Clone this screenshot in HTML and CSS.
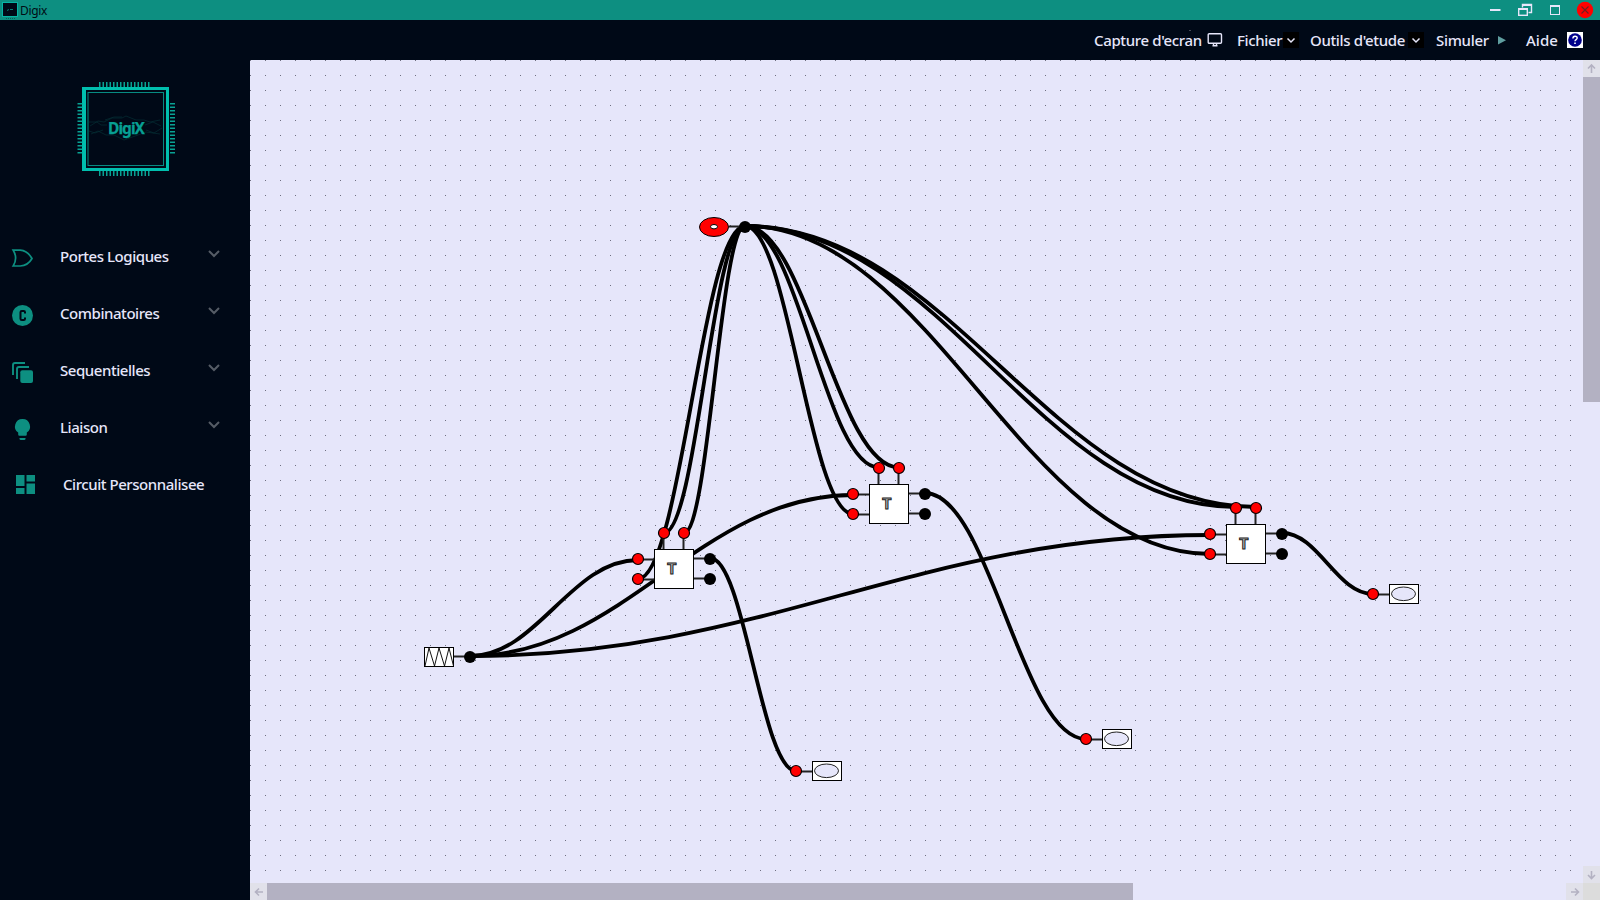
FILE: index.html
```
<!DOCTYPE html>
<html lang="fr">
<head>
<meta charset="utf-8">
<title>Digix</title>
<link rel="stylesheet" href="styles.css">
</head>
<body>
<div class="app">
  <header class="titlebar">
    <svg class="app-icon" width="20" height="20" viewBox="0 0 20 20"><rect x="2.5" y="2.5" width="15" height="14" fill="#000917" stroke="#06b5a5"/><path d="M7 10.500l2-1M10 9.500h3" stroke="#087d75"/><path d="M6 18.500h9" stroke="#075e58" stroke-dasharray="1 1"/></svg>
    <span class="app-name">Digix</span>
    <div class="window-buttons">
      <svg width="120" height="20" viewBox="0 0 120 20" fill="none" stroke="#e6e6fa">
        <path d="M10 10H20.500" stroke-width="2"/>
        <path d="M42.500 7.500V4.500H51.500V12.500H48.500" stroke-width="1.400"/><path d="M42 5H52" stroke-width="2"/>
        <rect x="38.700" y="8.700" width="8.600" height="6.600" stroke-width="1.400"/><path d="M38 9H48" stroke-width="2"/>
        <rect x="70.500" y="5.500" width="9" height="9"/><path d="M70 6H80" stroke-width="2"/>
        <circle cx="105" cy="10" r="8.200" fill="#f00" stroke="none"/><path d="M101.500 6.500l7 7m0-7l-7 7" stroke="#6f2020" stroke-width="1.100"/>
      </svg>
    </div>
  </header>
  <nav class="menubar">
    <span class="menu m-capture">Capture d'ecran</span>
    <svg class="i-monitor" width="16" height="16" viewBox="0 0 16 16" fill="none" stroke="#e6e6fa" stroke-width="1.400"><rect x="1.200" y="1.700" width="13.300" height="9.600" rx="1"/><path d="M6.500 11.500v2.500M9.500 11.500v2.500M5.500 13.800h5"/></svg>
    <span class="menu m-fichier">Fichier</span>
    <svg class="i-drop d1" width="16" height="16" viewBox="0 0 16 16"><rect width="16" height="16"/><path d="M4.500 6.500L8 10l3.500-3.500" fill="none" stroke="#e6e6fa" stroke-width="1.500"/></svg>
    <span class="menu m-outils">Outils d'etude</span>
    <svg class="i-drop d2" width="16" height="16" viewBox="0 0 16 16"><rect width="16" height="16"/><path d="M4.500 6.500L8 10l3.500-3.500" fill="none" stroke="#e6e6fa" stroke-width="1.500"/></svg>
    <span class="menu m-simuler">Simuler</span>
    <svg class="i-play" width="8" height="16" viewBox="0 0 8 16"><path d="M0 4l8 4.200L0 12.500z" fill="#5f9ea0"/></svg>
    <span class="menu m-aide">Aide</span>
    <svg class="i-help" width="16" height="16" viewBox="0 0 16 16"><rect width="16" height="16" fill="#fff"/><circle cx="8" cy="8" r="6.800" fill="#00008b"/><path d="M5.900 6.500c0-3 4.300-3 4.300-.4 0 1.500-2.200 1.500-2.200 3.200" fill="none" stroke="#fff" stroke-width="1.400"/><path d="M7.200 10.600h1.600v1.500H7.200z" fill="#fff"/></svg>
  </nav>
  <aside class="sidebar">
    <svg class="logo" width="104" height="100" viewBox="74 80 104 100" fill="none">
      <path d="M82 87H169V171H82zM86 90V168H166V90z" fill="#00bfae" fill-rule="evenodd"/>
      <rect x="88" y="92.500" width="75.500" height="73" stroke="#078b82"/>
      <g stroke="#08a294" stroke-dasharray="1.500 2">
        <path d="M99 84.500H150.500M99 173.500H150.500" stroke-width="5"/>
        <path d="M80 103V154M172.500 103V154" stroke-width="5"/>
      </g>
      <g stroke="#052e34" stroke-width=".7">
        <path d="M89 122h8l4 3h6M90 126l8-5 6 1 8-4h10l4-2 10 4h8l6 2 10-2M89 131l6 2 8-3M91 134l7-3 8 4h8l10 5 14-5 8-3 14 2M145 125l8-3 8 4M146 130l8 3 8-5M105 120l9-3h8"/>
      </g>
      <text x="126.500" y="134.400" text-anchor="middle" textLength="37" class="logo-text">DigiX</text>
    </svg>
    <ul class="nav">
      <li class="item"><svg class="ico" width="24" height="24" viewBox="0 0 24 24" fill="none" stroke="#0d8f81" stroke-width="1.700"><path d="M2.200 3.200h7C14.500 3.600 18.500 7 21 11.500 18.500 16 14.500 18.700 9.200 19h-7C5.200 14 5.200 8 2.200 3.200z"/></svg><span class="label">Portes Logiques</span><svg class="chev" width="12" height="8" viewBox="0 0 12 8"><path d="M1 1l5 5 5-5"/></svg></li>
      <li class="item"><svg class="ico" width="24" height="24" viewBox="0 0 24 24" fill="none"><circle cx="11.500" cy="11.500" r="10.500" fill="#0d8f81"/><path d="M14 9.500V8.300c0-.8-.5-1.300-1.300-1.300h-1.900c-.8 0-1.300.5-1.300 1.300v6.400c0 .8.500 1.300 1.300 1.300h1.900c.8 0 1.300-.5 1.300-1.300v-1.200" stroke="#000917" stroke-width="2"/></svg><span class="label">Combinatoires</span><svg class="chev" width="12" height="8" viewBox="0 0 12 8"><path d="M1 1l5 5 5-5"/></svg></li>
      <li class="item"><svg class="ico" width="24" height="24" viewBox="0 0 24 24" fill="none" stroke="#0d8f81" stroke-width="1.900"><path d="M2 14V4q0-2 2-2H14M6 18V8q0-2 2-2H18"/><rect x="9.300" y="9.300" width="12.700" height="12.700" rx="2" fill="#0d8f81" stroke="none"/></svg><span class="label">Sequentielles</span><svg class="chev" width="12" height="8" viewBox="0 0 12 8"><path d="M1 1l5 5 5-5"/></svg></li>
      <li class="item"><svg class="ico" width="24" height="24" viewBox="0 0 24 24" fill="#0d8f81"><path d="M11.500 1a7.400 7.400 0 0 0-4.300 13.500v2q0 1.200 1.200 1.200h6.200q1.200 0 1.200-1.200v-2A7.400 7.400 0 0 0 11.500 1zM8.500 20h6v1.200l-1 .8h-4l-1-.8z"/></svg><span class="label">Liaison</span><svg class="chev" width="12" height="8" viewBox="0 0 12 8"><path d="M1 1l5 5 5-5"/></svg></li>
      <li class="item custom"><svg class="ico" width="24" height="24" viewBox="0 0 24 24" fill="#0d8f81"><path d="M2 1h8.500v11H2zM12.500 1H21v6.500h-8.500zM2 14h8.500v6H2zM12.500 9.500H21V20h-8.500z"/></svg><span class="label">Circuit Personnalisee</span></li>
    </ul>
  </aside>
  <main class="canvas">
    <svg class="sheet" width="1350" height="840" viewBox="250 60 1350 840">
      <defs>
        <pattern id="grid" x="250" y="60" width="15" height="15" patternUnits="userSpaceOnUse"><rect width="1" height="1" fill="#6f6f80"/></pattern>
        <g id="flipflop">
          <path d="M-16 10.500H0M-16 30.500H0M40 9.500H56M40 29.500H56M9.500-16V0M29.500-16V0" class="lead"/>
          <rect x=".5" y=".5" width="39" height="39" class="box"/>
          <text x="13" y="25" class="glyph">T</text>
          <g class="in"><circle cx="-16" cy="10" r="5.500"/><circle cx="-16" cy="30" r="5.500"/><circle cx="10" cy="-16" r="5.500"/><circle cx="30" cy="-16" r="5.500"/></g>
          <circle cx="56" cy="10" r="6"/><circle cx="56" cy="30" r="6"/>
        </g>
        <g id="lamp">
          <path d="M-16 10.500H0" class="lead"/>
          <rect x=".5" y=".5" width="29" height="19" class="box"/>
          <ellipse cx="14.500" cy="9.800" rx="12" ry="6.800" fill="#e6e6fa" stroke="#222"/>
          <circle cx="-16" cy="10" r="5.500" class="in"/>
        </g>
      </defs>
      <rect x="250" y="60" width="1350" height="840" fill="url(#grid)"/>
      <g class="wires">
        <path d="M470 656C537.200 656 570.800 560 638 560"/>
        <path d="M470 656C623.200 656 699.800 495 853 495"/>
        <path d="M470 656C766 656 914 535 1210 535"/>
        <path d="M745 226C702.200 226 680.800 579 638 579"/>
        <path d="M745 226C712.600 226 696.400 533 664 533"/>
        <path d="M745 226C720.600 226 708.400 533 684 533"/>
        <path d="M745 226C788.200 226 809.800 514 853 514"/>
        <path d="M745 226C798.600 226 825.400 467.500 879 467.500"/>
        <path d="M745 226C806.600 226 837.400 467.500 899 467.500"/>
        <path d="M745 226C931 226 1024 554 1210 554"/>
        <path d="M745 226C941.400 226 1039.600 507 1236 507"/>
        <path d="M745 226C949.400 226 1051.600 507 1256 507"/>
        <path d="M710 558C744.400 558 761.600 771 796 771"/>
        <path d="M925 493C989.400 493 1021.600 739 1086 739"/>
        <path d="M1282 533C1318.400 533 1336.600 594 1373 594"/>
      </g>
      <path d="M729 226.500h16" class="lead"/>
      <ellipse cx="714" cy="227" rx="14.500" ry="9.500" fill="#f00" stroke="#000"/>
      <ellipse cx="714" cy="226.700" rx="3.500" ry="2.200" fill="#fff" stroke="#000"/>
      <circle cx="745" cy="227" r="6"/>
      <path d="M454 656.500h16" class="lead"/>
      <rect x="424.500" y="647.500" width="29" height="19" class="box"/>
      <path d="M425 666l4-18 5.500 18 4.500-18 5.500 18 4.500-18 4.500 18" fill="none" stroke="#111"/>
      <circle cx="470" cy="657" r="6"/>
      <use href="#flipflop" x="654" y="549"/>
      <use href="#flipflop" x="869" y="484"/>
      <use href="#flipflop" x="1226" y="524"/>
      <use href="#lamp" x="812" y="761"/>
      <use href="#lamp" x="1102" y="729"/>
      <use href="#lamp" x="1389" y="584"/>
    </svg>
    <div class="scroll vertical">
      <svg class="arrow" width="17" height="17" viewBox="0 0 17 17"><path d="M8.500 13V6M5 8.500L8.500 5 12 8.500"/></svg>
      <div class="thumb"></div>
      <svg class="arrow end" width="17" height="17" viewBox="0 0 17 17"><path d="M8.500 5v7M5 9l3.500 3.500L12 9"/></svg>
    </div>
    <div class="scroll horizontal">
      <svg class="arrow" width="17" height="17" viewBox="0 0 17 17"><path d="M13 9H6M9 5.500L5.500 9 9 12.500"/></svg>
      <div class="thumb"></div>
      <svg class="arrow end" width="17" height="17" viewBox="0 0 17 17"><path d="M5 9h7M9 5.500L12.500 9 9 12.500"/></svg>
    </div>
    <div class="corner"></div>
  </main>
</div>
</body>
</html>
```
FILE: styles.css
```
* { box-sizing: border-box; }
body { margin: 0; background: #fff; font-family: "Noto Sans", "Open Sans", sans-serif; overflow: hidden; }
svg { display: block; flex: none; }
.app { width: 1600px; height: 900px; display: grid; grid-template: 20px 40px 840px / 250px 1350px; background: #000917; }
.titlebar { grid-column: 1 / -1; background: #0d8f81; display: flex; align-items: center; }
.app-name { font-size: 12px; letter-spacing: -.35px; line-height: 20px; padding-top: 2px; color: #000c14; }
.window-buttons { margin-left: auto; }
.menubar { grid-column: 1 / -1; display: flex; align-items: center; padding-left: 1094px; }
.menu, .label { font-size: 15px; font-weight: 500; color: #e6e6fa; white-space: nowrap; flex: none; line-height: 22px; letter-spacing: -.45px; }
.menu { position: relative; letter-spacing: -.35px; }
.m-capture { width: 113px; }
.m-capture::after { content: ""; position: absolute; left: 95px; top: 1px; width: 2px; height: 1px; background: #454955; }
.i-monitor { width: 16px; margin-right: 14px; }
.m-fichier { width: 46px; }
.d1 { margin-right: 11px; }
.m-outils { width: 98px; }
.d2 { margin-right: 12px; }
.m-simuler { width: 62px; letter-spacing: -.3px; }
.i-play { margin-right: 20px; }
.m-aide { width: 41px; letter-spacing: 0; }
.sidebar { padding-top: 20px; }
.logo { margin-left: 74px; }
.logo-text { font-family: "Noto Sans", sans-serif; font-size: 15.500px; font-weight: 700; fill: #079f93; stroke: #079f93; stroke-width: .25; }
.nav { list-style: none; margin: 66px 0 0; padding: 0; }
.item { height: 57px; display: flex; align-items: flex-start; padding-left: 11px; }
.item .ico { margin-top: 1px; }
.label { width: 148px; margin-left: 25px; line-height: 21px; }
.item.custom { padding-left: 14px; }
.custom .ico { margin-top: 0; }
.chev { margin-top: 4px; }
.chev path { fill: none; stroke: #555c66; stroke-width: 2; }
.canvas { background: #e6e6fa; display: grid; grid-template: 823px 17px / 1333px 17px; }
.sheet { grid-area: 1 / 1 / 3 / 3; }
.wires { fill: none; stroke: #000; stroke-width: 3.800; }
.lead { fill: none; stroke: #222; stroke-width: 2; }
.box { fill: #fff; stroke: #000; }
.in { fill: #f00; stroke: #000; stroke-width: 1.200; }
.glyph { font-family: "Liberation Mono", monospace; font-size: 16px; font-weight: 700; fill: #bbb; stroke: #222; stroke-width: 1; }
.scroll { display: flex; }
.vertical { grid-area: 1 / 2; flex-direction: column; background: #e6e6fa; }
.horizontal { grid-area: 2 / 1; background: #e6e6fa; }
.thumb { background: #b3b1c2; }
.vertical .thumb { height: 325px; }
.horizontal .thumb { width: 866px; }
.arrow { background: #e1e1ea; }
.arrow path { fill: none; stroke: #b3b1c2; stroke-width: 1.600; }
.vertical .end { margin-top: auto; }
.horizontal .end { margin-left: auto; }
.corner { grid-area: 2 / 2; background: #dcdcdc; }
```
